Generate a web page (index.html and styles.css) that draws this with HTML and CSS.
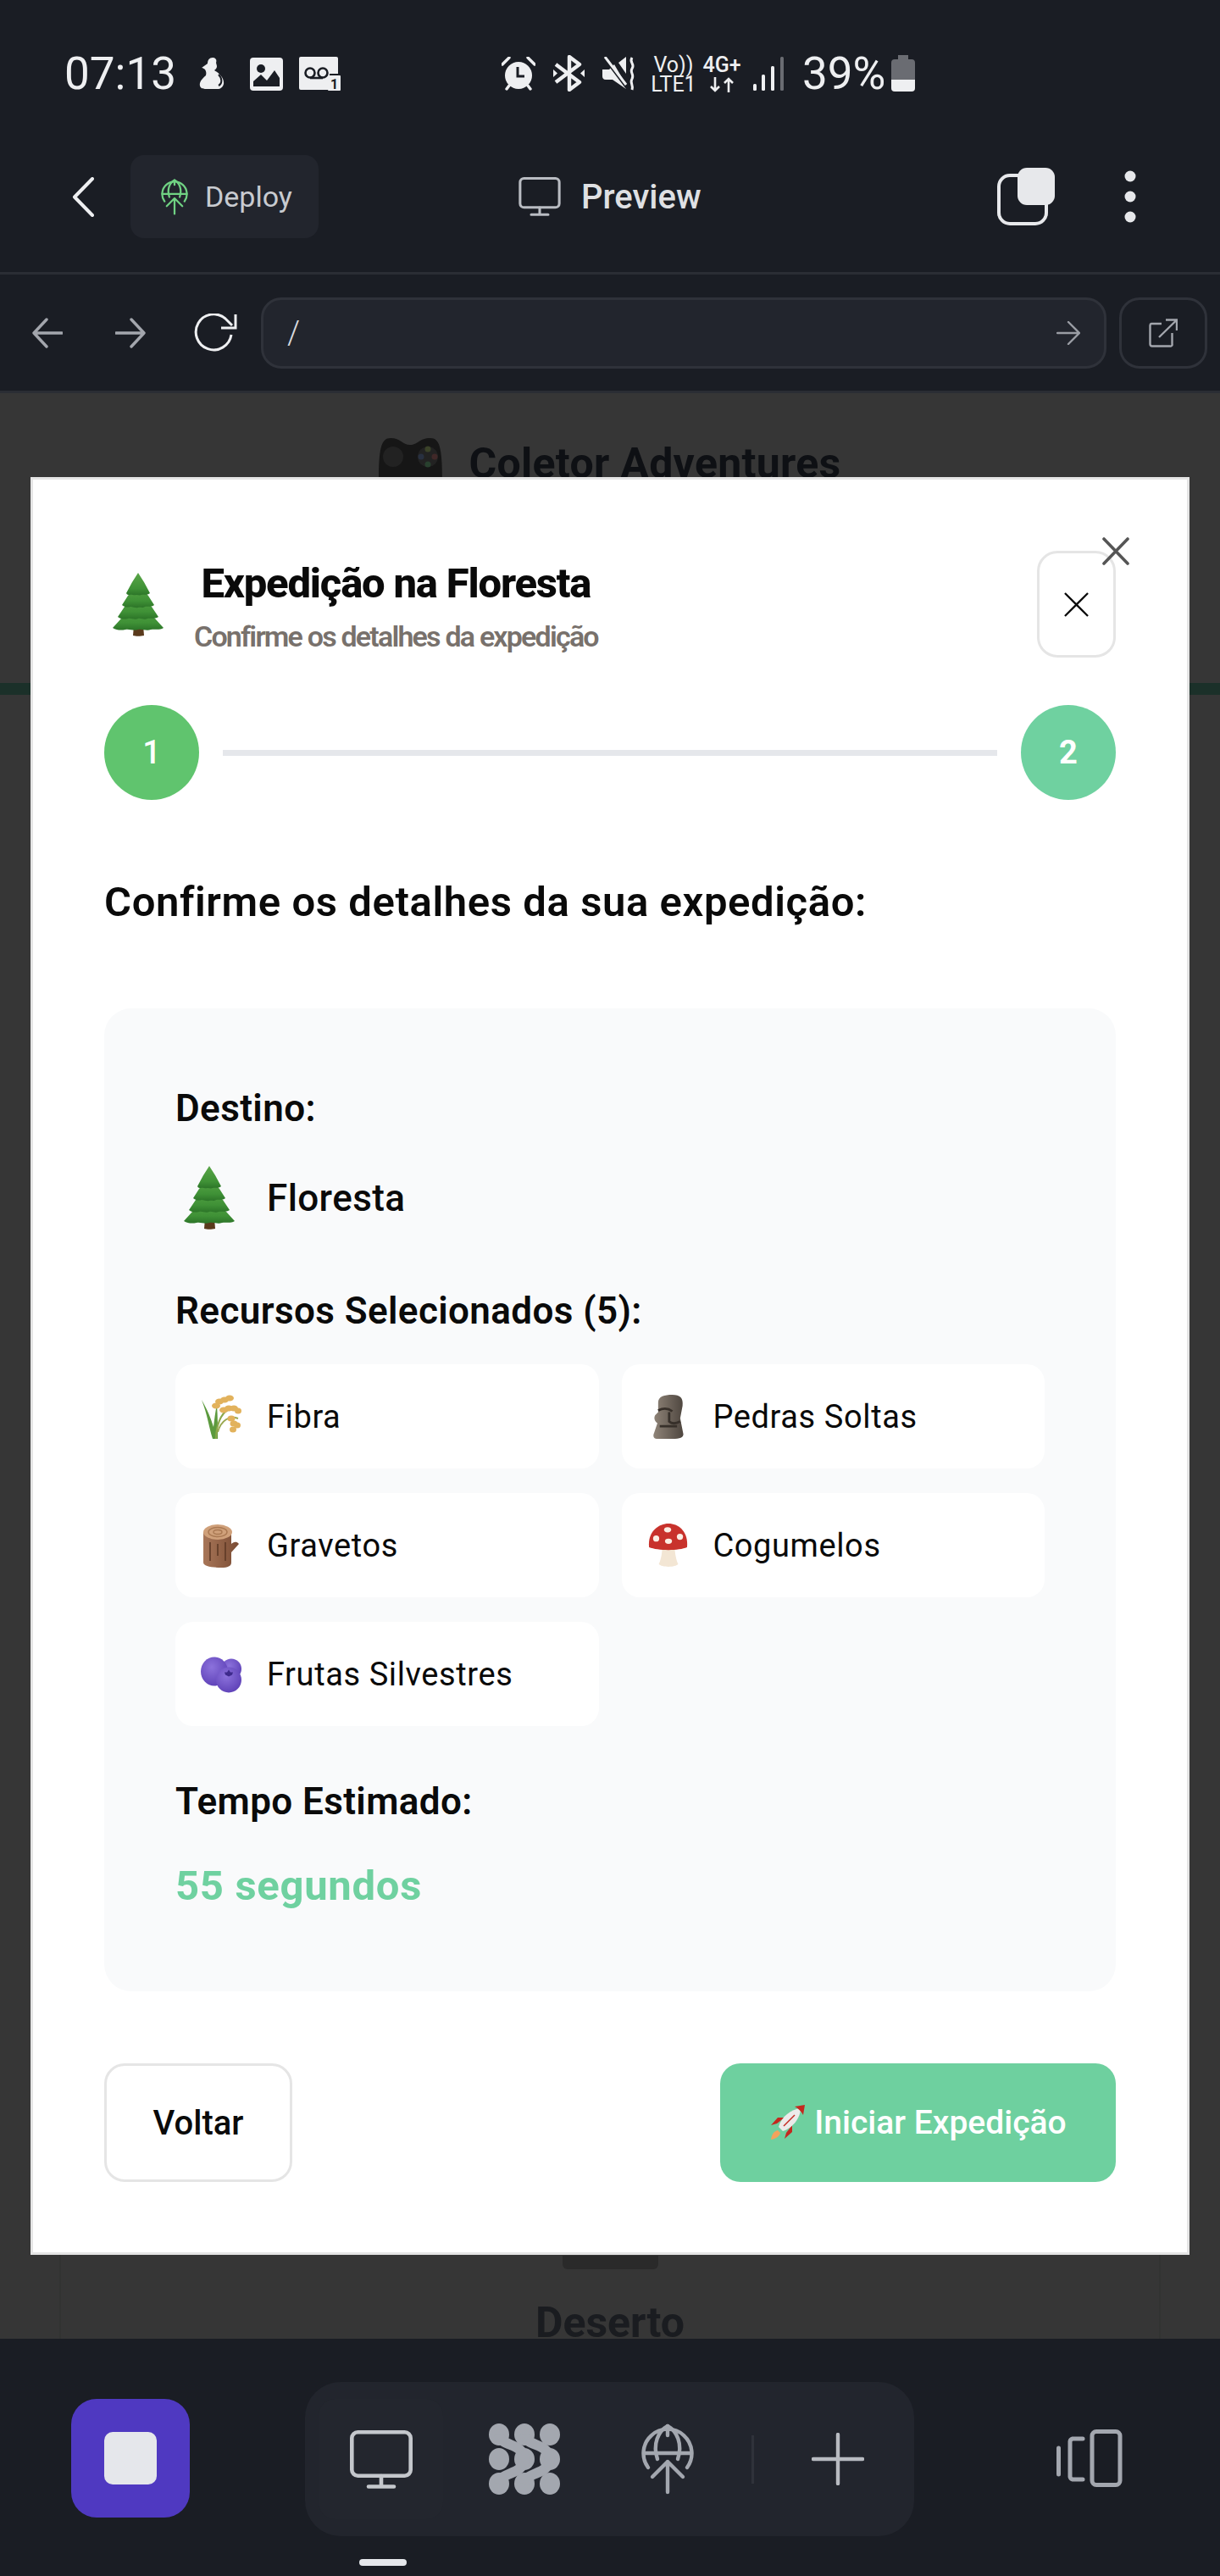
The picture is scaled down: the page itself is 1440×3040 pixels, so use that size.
FILE: index.html
```html
<!DOCTYPE html>
<html lang="pt">
<head>
<meta charset="utf-8">
<title>Expedição na Floresta</title>
<link rel="stylesheet" href="styles.css">
</head>
<body>
<svg class="defs" width="0" height="0">
  <defs>
    <linearGradient id="leaf" x1="0" y1="0" x2="0" y2="1"><stop offset="0" stop-color="#5aa648"/><stop offset=".7" stop-color="#3f9136"/><stop offset="1" stop-color="#2c7428"/></linearGradient>
    <radialGradient id="berry" cx=".4" cy=".35" r=".75"><stop offset="0" stop-color="#8c72dc"/><stop offset="1" stop-color="#5a3db4"/></radialGradient>
    <linearGradient id="bark" x1="0" y1="0" x2="1" y2="0"><stop offset="0" stop-color="#a87658"/><stop offset="1" stop-color="#7a4c34"/></linearGradient>
    <linearGradient id="stone" x1="0" y1="0" x2="1" y2="0"><stop offset="0" stop-color="#8f8478"/><stop offset="1" stop-color="#4e463f"/></linearGradient>
    <symbol id="tree" viewBox="0 0 60 75">
      <path d="M25 62 H36 L37 74 C33 75 27 75 24 74 Z" fill="#5a3a1c"/>
      <path d="M30 38 L50 54 L60 65 C55 68 50 66 45 67 C40 69 35 66 30 67 C25 69 20 66 15 67 C10 68 5 68 0 65 L10 54 Z" fill="url(#leaf)"/>
      <path d="M30 26 L46 40 L54 52 C49 55 45 53 41 54 C37 56 33 53 30 54 C26 56 22 53 18 54 C14 55 10 55 6 52 L14 40 Z" fill="url(#leaf)"/>
      <path d="M30 14 L42 27 L49 38 C45 41 41 39 38 40 C35 42 33 40 30 41 C27 42 24 40 21 40 C18 41 15 41 11 38 L18 27 Z" fill="url(#leaf)"/>
      <path d="M30 0 L37 11 L44 24 C40 27 37 25 34 26 C32 27 30 26 28 26 C25 27 22 25 20 26 C18 26 17 26 16 24 L23 11 Z" fill="url(#leaf)"/>
    </symbol>
    <symbol id="globe-up" viewBox="0 0 62 84">
      <g fill="none" stroke="currentColor" stroke-width="4.4" stroke-linecap="round" stroke-linejoin="round">
        <path d="M8 52 A28.5 28.5 0 1 1 54 52"/>
        <path d="M19 42 C13 24 20 9 31 3 C42 9 49 24 43 42"/>
        <path d="M31 3 V14 M3 35 H59"/>
        <path d="M31 81 V45 M13 63 L31 45 L49 63"/>
      </g>
    </symbol>
    <symbol id="monitor" viewBox="0 0 74 69">
      <g fill="none" stroke="currentColor" stroke-width="4.6" stroke-linecap="round">
        <rect x="2.3" y="2.3" width="69.4" height="51.4" rx="7"/>
        <path d="M37 54 V66 M22 66.5 H52"/>
      </g>
    </symbol>
  </defs>
</svg>

<div class="app">
  <div class="status">
    <span class="status-time">07:13</span>
    <svg class="ic-person" viewBox="0 0 30 38"><path d="M16 0 C20 0 21 3 20 6 L21 10 C21 13 19 14 18 15 C23 18 30 24 29 31 C28 35 25 37 22 37 H7 C3 37 0 35 1 30 C2 26 5 24 8 21 C9 17 8 13 3 12 L10 7 C10 3 12 0 16 0 Z" fill="#eeeff1"/><path d="M23 20 C28 25 27 31 23 33" stroke="#1a1d24" stroke-width="2" fill="none"/></svg>
    <svg class="ic-image" viewBox="0 0 39 39"><rect width="39" height="39" rx="4" fill="#eeeff1"/><circle cx="13" cy="13" r="5" fill="#1a1d24"/><path d="M4 34 V28 L13 20 L20 27 L29 15 L35 24 V34 Z" fill="#1a1d24"/></svg>
    <svg class="ic-vm" viewBox="0 0 49 40"><path d="M2 0 H44 A2 2 0 0 1 46 2 V20 H36 V39 H2 A2 2 0 0 1 0 37 V2 A2 2 0 0 1 2 0 Z" fill="#eeeff1"/><circle cx="13" cy="19" r="5.5" fill="none" stroke="#1a1d24" stroke-width="2.6"/><circle cx="28" cy="19" r="5.5" fill="none" stroke="#1a1d24" stroke-width="2.6"/><path d="M13 25 H28" stroke="#1a1d24" stroke-width="2.6"/><rect x="34" y="22" width="15" height="18" rx="1" fill="#eeeff1"/><text x="41.5" y="37.5" class="vm-num">1</text></svg>
    <span class="status-spacer"></span>
    <svg class="ic-alarm" viewBox="0 0 40 40"><circle cx="20" cy="22" r="16" fill="#eeeff1"/><path d="M19 12 V23 H27" fill="none" stroke="#1a1d24" stroke-width="3"/><path d="M1 9 L9 1 M39 9 L31 1 M6 38 L9 34 M34 38 L31 34" stroke="#eeeff1" stroke-width="3.4" stroke-linecap="round"/></svg>
    <svg class="ic-bt" viewBox="0 0 37 43"><path d="M3 11 L31 32 L19 41 V2 L31 11 L3 32" fill="none" stroke="#eeeff1" stroke-width="4.4" stroke-linejoin="round"/><path d="M0 17 L5 21.5 L0 26 Z M37 17 L32 21.5 L37 26 Z" fill="#eeeff1"/></svg>
    <svg class="ic-mute" viewBox="0 0 40 40"><path d="M0 15 H8 L14 9 L28 33 V38 L12 27 H4 C1 27 0 25 0 23 Z M19 7 L28 0 V20 Z" fill="#eeeff1"/><path d="M2 1 L29 37" stroke="#1a1d24" stroke-width="3"/><path d="M3 0 L28 33" stroke="#eeeff1" stroke-width="3"/><path d="M35 1 C31 7 39 8 35 14 C32 19 38 20 35 26 C32 31 37 33 35 39" fill="none" stroke="#eeeff1" stroke-width="3"/></svg>
    <div class="net-volte">
      <span class="net-top">Vo))</span>
      <span class="net-bottom">LTE1</span>
    </div>
    <div class="net-4g">
      <span class="net-top">4G+</span>
      <svg class="ic-updown" viewBox="0 0 30 18"><path d="M7 0 V16 M2 11 L7 16 L12 11 M23 18 V2 M18 7 L23 2 L28 7" fill="none" stroke="#eeeff1" stroke-width="2.6"/></svg>
    </div>
    <svg class="ic-signal" viewBox="0 0 36 40"><rect x="0" y="32" width="4" height="8" rx="1.5" fill="#eeeff1"/><rect x="10" y="21" width="4" height="19" rx="1.5" fill="#eeeff1"/><rect x="21" y="11" width="4" height="29" rx="1.5" fill="#eeeff1"/><rect x="32" y="0" width="4" height="40" rx="1.5" fill="#6a6c72"/></svg>
    <span class="status-batt">39%</span>
    <svg class="ic-batt" viewBox="0 0 28 43"><path d="M8 0 H20 V5 H24 A4 4 0 0 1 28 9 V29 H0 V9 A4 4 0 0 1 4 5 H8 Z" fill="#6a6c72"/><path d="M0 29 H28 V39 A4 4 0 0 1 24 43 H4 A4 4 0 0 1 0 39 Z" fill="#eeeff1"/></svg>
  </div>

  <header class="topbar">
    <div class="topbar-left">
      <svg class="ic-chevron" viewBox="0 0 26 47"><path d="M24 2 L3 23.5 L24 45" fill="none" stroke="#eeeff1" stroke-width="4" stroke-linecap="round" stroke-linejoin="round"/></svg>
      <button class="deploy-btn"><svg class="ic-deploy"><use href="#globe-up"/></svg><span>Deploy</span></button>
    </div>
    <div class="topbar-center"><svg class="ic-preview"><use href="#monitor"/></svg><span>Preview</span></div>
    <div class="topbar-right">
      <svg class="ic-copy" viewBox="0 0 68 68"><rect x="2" y="9" width="56" height="57" rx="13" fill="none" stroke="#e7e8eb" stroke-width="4"/><rect x="24" y="0" width="44" height="44" rx="11" fill="#e7e8eb"/></svg>
      <svg class="ic-dots" viewBox="0 0 14 62"><circle cx="7" cy="7" r="6.5"/><circle cx="7" cy="31" r="6.5"/><circle cx="7" cy="55" r="6.5"/></svg>
    </div>
  </header>

  <nav class="urlbar">
    <svg class="ic-nav" viewBox="0 0 36 36"><path d="M35 18 H2 M17 2 L2 18 L17 34" fill="none" stroke="#a3a6ad" stroke-width="3.4" stroke-linecap="round" stroke-linejoin="round"/></svg>
    <svg class="ic-nav" viewBox="0 0 36 36"><path d="M1 18 H34 M19 2 L34 18 L19 34" fill="none" stroke="#a3a6ad" stroke-width="3.4" stroke-linecap="round" stroke-linejoin="round"/></svg>
    <svg class="ic-reload" viewBox="0 0 51 46"><path d="M44 25 A21 21 0 1 1 37 6 L45 14" fill="none" stroke="#eeeff1" stroke-width="3"/><path d="M49 1 V17 H32" fill="none" stroke="#eeeff1" stroke-width="3"/></svg>
    <div class="url-input"><span class="url-text">/</span><svg class="ic-go" viewBox="0 0 28 28"><path d="M1 14 H27 M14 1 L27 14 L14 27" fill="none" stroke="#9a9da4" stroke-width="2.4" stroke-linecap="round" stroke-linejoin="round"/></svg></div>
    <button class="open-btn"><svg class="ic-open" viewBox="0 0 34 34"><path d="M15 6 H3 A2 2 0 0 0 1.500 8 V30 A2.500 2.500 0 0 0 4 32.500 H25 A2 2 0 0 0 27.500 30 V17" fill="none" stroke="#a3a6ad" stroke-width="2.4"/><path d="M12 22 L33 1.500 M20 1.500 H33 V14" fill="none" stroke="#a3a6ad" stroke-width="2.4"/></svg></button>
  </nav>

  <main class="stage">
    <div class="bg-page">
      <div class="bg-head">
        <svg class="bg-pad" viewBox="0 0 75 90"><path d="M14 0 C26 0 28 8 37 8 C46 8 48 0 61 0 C72 0 75 12 75 50 C75 74 70 90 62 90 C50 90 48 70 37 70 C26 70 25 90 13 90 C5 90 0 74 0 50 C0 12 3 0 14 0 Z" fill="#161616"/><circle cx="17" cy="22" r="12" fill="#222"/><circle cx="58" cy="22" r="12" fill="#222"/><circle cx="58" cy="13" r="3.500" fill="#3a4228"/><circle cx="66" cy="22" r="3.500" fill="#402828"/><circle cx="50" cy="22" r="3.500" fill="#283040"/><circle cx="58" cy="31" r="3.500" fill="#28402e"/></svg>
        <span class="bg-title">Coletor Adventures</span>
      </div>
      <div class="bg-card">
        <div class="bg-card-bar"></div>
        <div class="bg-card-name">Deserto</div>
      </div>
    </div>

    <section class="modal">
      <svg class="modal-x" viewBox="0 0 32 33"><path d="M2 2 L30 31 M30 2 L2 31" stroke="#555" stroke-width="3.6" stroke-linecap="round"/></svg>
      <div class="modal-head">
        <div class="modal-head-main">
          <svg class="em-tree-head"><use href="#tree"/></svg>
          <div class="modal-titles">
            <h2 class="modal-title">Expedição na Floresta</h2>
            <p class="modal-sub">Confirme os detalhes da expedição</p>
          </div>
        </div>
        <button class="btn-close"><svg viewBox="0 0 30 30" class="ic-close"><path d="M1 1 L29 29 M29 1 L1 29" stroke="#0a0a0a" stroke-width="2.4"/></svg></button>
      </div>

      <div class="steps">
        <div class="step step-one">1</div>
        <div class="step-line"></div>
        <div class="step step-two">2</div>
      </div>

      <h3 class="confirm-title">Confirme os detalhes da sua expedição:</h3>

      <div class="panel">
        <div class="label">Destino:</div>
        <div class="dest"><svg class="em-tree-dest"><use href="#tree"/></svg><span>Floresta</span></div>

        <div class="label label-res">Recursos Selecionados (5):</div>
        <div class="res-grid">
          <div class="res">
            <svg class="em" viewBox="0 0 48 52"><path d="M14 52 C10 40 8 24 1 6 C8 18 12 28 15 38 C16 30 17 20 19 12 C20 26 20 38 20 52 Z" fill="#5c9a3e"/><path d="M18 52 C18 36 24 22 32 18" fill="none" stroke="#8aa84a" stroke-width="2"/><path d="M20 44 C24 30 34 24 44 28" fill="none" stroke="#9aa850" stroke-width="2"/><g fill="#e2b25c"><ellipse cx="22" cy="8" rx="5" ry="3.500"/><ellipse cx="28" cy="6" rx="5" ry="3.500"/><ellipse cx="34" cy="4" rx="5" ry="3.500"/><ellipse cx="18" cy="13" rx="5" ry="3.500"/><ellipse cx="27" cy="18" rx="5" ry="3.500"/><ellipse cx="33" cy="16" rx="5" ry="3.500"/><ellipse cx="39" cy="16" rx="5" ry="3.500"/><ellipse cx="44" cy="19" rx="4" ry="3.500"/><ellipse cx="36" cy="28" rx="4.500" ry="3.500"/><ellipse cx="39" cy="34" rx="4.500" ry="3.500"/><ellipse cx="38" cy="41" rx="4" ry="3.500"/><ellipse cx="43" cy="36" rx="4" ry="3.500"/></g></svg>
            <span>Fibra</span>
          </div>
          <div class="res">
            <svg class="em" viewBox="0 0 48 56"><path d="M12 10 C12 2 20 0 30 0 C40 0 44 4 43 14 L40 30 L44 50 C44 54 40 56 30 56 H10 C6 56 5 52 7 48 L11 36 C8 34 6 30 8 26 L12 22 Z" fill="url(#stone)"/><path d="M12 20 C20 16 26 18 30 21 M26 22 L26 34 C30 38 36 36 40 34" fill="none" stroke="#37302a" stroke-width="3"/><path d="M14 40 H36" stroke="#37302a" stroke-width="3"/></svg>
            <span>Pedras Soltas</span>
          </div>
          <div class="res">
            <svg class="em" viewBox="0 0 44 52"><path d="M1 10 V46 C1 50 10 52 22 52 C30 52 34 50 34 46 V34 L43 24 C40 20 36 22 34 24 V10 Z" fill="url(#bark)"/><ellipse cx="18" cy="10" rx="17" ry="9" fill="#cfa07a"/><ellipse cx="18" cy="10" rx="11" ry="5.500" fill="none" stroke="#a97852" stroke-width="1.400"/><ellipse cx="18" cy="10" rx="5" ry="2.500" fill="none" stroke="#a97852" stroke-width="1.400"/><path d="M9 22 V44 M18 24 V38 M27 22 V44" stroke="#5e3a26" stroke-width="1.600"/></svg>
            <span>Gravetos</span>
          </div>
          <div class="res">
            <svg class="em" viewBox="0 0 46 50"><path d="M17 24 H31 C31 34 33 42 35 46 C32 50 16 50 13 46 C16 40 17 32 17 24 Z" fill="#f3e6d4"/><path d="M2 27 C0 10 12 0 24 0 C36 0 47 10 45 27 C36 31 12 31 2 27 Z" fill="#c8322c"/><g fill="#fbeee4"><ellipse cx="23" cy="7" rx="4" ry="3"/><ellipse cx="10" cy="17" rx="3.500" ry="3.500"/><ellipse cx="24" cy="20" rx="4" ry="3"/><ellipse cx="37" cy="15" rx="3.500" ry="3.500"/></g></svg>
            <span>Cogumelos</span>
          </div>
          <div class="res">
            <svg class="em" viewBox="0 0 48 43"><circle cx="36" cy="15" r="12" fill="url(#berry)"/><ellipse cx="16" cy="18" rx="16" ry="17" fill="url(#berry)"/><circle cx="33" cy="28" r="15" fill="url(#berry)"/><path d="M33 16 L35 19 L38 19 L37 22 L33 24 L29 22 L28 19 L31 19 Z" fill="#3e2a8c"/></svg>
            <span>Frutas Silvestres</span>
          </div>
        </div>

        <div class="label label-time">Tempo Estimado:</div>
        <div class="time-value">55 segundos</div>
      </div>

      <div class="actions">
        <button class="btn-back">Voltar</button>
        <button class="btn-start">
          <svg class="em-rocket" viewBox="0 0 43 42"><path d="M2 41 C3 34 6 31 10 30 L13 33 C12 37 8 40 2 41 Z" fill="#f3a35c"/><path d="M9 22 L2 24 L10 15 L18 15 Z M20 33 L18 40 L27 32 L27 24 Z" fill="#c4281f"/><path d="M11 26 C14 14 26 5 37 4 C37 15 28 27 16 31 Z" fill="#eceaea"/><path d="M30 2 L42 0 L40 12 C38 8 34 4 30 2 Z" fill="#c4281f"/><path d="M17 25 L30 12" stroke="#c4281f" stroke-width="1.400"/></svg>
          <span>Iniciar Expedição</span>
        </button>
      </div>
    </section>
  </main>

  <footer class="bottombar">
    <button class="btn-stop"><span class="stop-square"></span></button>
    <div class="dock">
      <div class="dock-item dock-active"><svg class="ic-dock-monitor"><use href="#monitor"/></svg></div>
      <div class="dock-item"><svg class="ic-neural" viewBox="0 0 84 84"><g fill="#a3a7af"><ellipse cx="12" cy="13" rx="12" ry="13"/><ellipse cx="42" cy="13" rx="12" ry="13"/><ellipse cx="72" cy="13" rx="12" ry="13"/><ellipse cx="12" cy="42" rx="12" ry="13"/><ellipse cx="42" cy="42" rx="12" ry="13"/><ellipse cx="72" cy="42" rx="12" ry="13"/><ellipse cx="12" cy="71" rx="12" ry="13"/><ellipse cx="42" cy="71" rx="12" ry="13"/><ellipse cx="72" cy="71" rx="12" ry="13"/></g><g fill="none" stroke="#a3a7af" stroke-width="12"><path d="M12 13 C14 28 40 22 42 42 C40 62 14 56 12 71"/><path d="M42 13 C44 28 70 22 72 42 C70 62 44 56 42 71"/></g></svg></div>
      <div class="dock-item"><svg class="ic-dock-globe"><use href="#globe-up"/></svg></div>
      <span class="dock-sep"></span>
      <div class="dock-item"><svg class="ic-plus" viewBox="0 0 62 62"><path d="M31 2 V60 M2 31 H60" stroke="#b8bbc1" stroke-width="4.400" stroke-linecap="round"/></svg></div>
    </div>
    <svg class="ic-devices" viewBox="0 0 78 68"><g fill="none" stroke="#a3a7af" stroke-width="5" stroke-linecap="round"><rect x="42" y="2.500" width="33" height="63" rx="5"/><path d="M31 11 H19 A4 4 0 0 0 16 14 V56 A4 4 0 0 0 19 59 H31"/><path d="M2.500 22 V53"/></g></svg>
    <span class="home-indicator"></span>
  </footer>
</div>
</body>
</html>
```

FILE: styles.css
```css
* { box-sizing: border-box; }
html, body { margin: 0; padding: 0; }
body { background: #1a1d24; font-family: Roboto, "Noto Sans", sans-serif; color: #0a0a0a; }
button { font-family: inherit; padding: 0; cursor: pointer; }
h2, h3, p { margin: 0; }
.defs { position: absolute; }
svg { display: block; flex: none; }

.app { width: 1440px; height: 3040px; display: flex; flex-direction: column; background: #1a1d24; overflow: hidden; }

/* status */
.status { height: 143px; padding: 65px 0 0 76px; display: flex; align-items: flex-start; color: #eeeff1; flex: none; }
.status-time { width: 131px; font-size: 53px; line-height: 44px; margin-right: 28px; white-space: nowrap; }
.ic-person { width: 30px; height: 38px; margin: 3px 30px 0 0; }
.ic-image { width: 39px; height: 39px; margin: 3px 19px 0 0; }
.ic-vm { width: 49px; height: 40px; margin-top: 2px; }
.vm-num { font: 700 16px Roboto, sans-serif; text-anchor: middle; fill: #1a1d24; }
.status-spacer { width: 190px; flex: none; }
.ic-alarm { width: 40px; height: 40px; margin: 2px 21px 0 0; }
.ic-bt { width: 37px; height: 43px; margin: 0 21px 0 0; }
.ic-mute { width: 40px; height: 40px; margin: 2px 18px 0 0; }
.net-volte, .net-4g { display: flex; flex-direction: column; align-items: center; margin-top: 1px; font-size: 25px; line-height: 22px; width: 52px; }
.net-volte { margin-right: 9px; }
.net-4g { width: 44px; margin-right: 15px; font-weight: 500; }
.net-top { height: 23px; white-space: nowrap; }
.net-bottom { white-space: nowrap; }
.ic-updown { width: 30px; height: 18px; margin-top: 2px; }
.ic-signal { width: 36px; height: 40px; margin: 2px 22px 0 0; }
.status-batt { width: 96px; font-size: 53px; line-height: 44px; margin-right: 9px; white-space: nowrap; }
.ic-batt { width: 28px; height: 43px; }

/* top bar */
.topbar { height: 181px; flex: none; display: flex; align-items: center; border-bottom: 3px solid #2a2d34; padding: 0 99px 0 85px; }
.topbar-left { display: flex; align-items: center; gap: 43px; width: 527px; }
.ic-chevron { width: 26px; height: 47px; }
.deploy-btn { width: 222px; height: 98px; display: flex; align-items: center; gap: 20px; padding-left: 36px; background: #22252d; border: 0; border-radius: 16px; color: #c8cbd0; font-size: 34px; }
.ic-deploy { width: 32px; height: 43px; color: #70d283; }
.topbar-center { display: flex; align-items: center; gap: 24px; color: #dfe0e3; font-size: 40px; font-weight: 500; }
.ic-preview { width: 50px; height: 46px; color: #b9bcc2; }
.topbar-right { display: flex; align-items: center; gap: 82px; margin-left: auto; }
.ic-copy { width: 68px; height: 68px; }
.ic-dots { width: 14px; height: 62px; fill: #e7e8eb; }

/* url */
.urlbar { height: 140px; flex: none; display: flex; align-items: center; border-bottom: 3px solid #2a2d34; padding: 0 15px 0 38px; }
.ic-nav { width: 36px; height: 36px; margin-right: 62px; }
.ic-nav + .ic-nav { margin-right: 57px; }
.ic-reload { width: 51px; height: 46px; margin-right: 28px; }
.url-input { flex: 1; height: 84px; border: 3px solid #2f323a; border-radius: 24px; background: #22252d; display: flex; align-items: center; justify-content: space-between; padding: 0 28px 0 28px; }
.url-text { font-size: 38px; color: #d8dade; font-weight: 300; }
.ic-go { width: 28px; height: 28px; }
.open-btn { width: 104px; height: 84px; margin-left: 15px; border: 3px solid #2f323a; border-radius: 24px; background: transparent; display: flex; align-items: center; justify-content: center; }
.ic-open { width: 34px; height: 34px; }

/* backdrop */
.stage { flex: 1; position: relative; background: #363636; overflow: hidden; }
.bg-page { height: 100%; display: flex; flex-direction: column; }
.bg-head { height: 356px; flex: none; padding-top: 53px; display: flex; justify-content: center; gap: 31px; border-bottom: 14px solid #1b3029; }
.bg-pad { width: 75px; height: 90px; }
.bg-title { font-size: 50px; font-weight: 700; color: #0e1014; line-height: 60px; letter-spacing: .3px; }
.bg-card { flex: 1; margin: 0 70px; border-left: 2px solid #323332; border-right: 2px solid #323332; display: flex; flex-direction: column; align-items: center; padding-top: 1842px; }
.bg-card-bar { width: 113px; height: 16px; background: #2a2a2a; border-radius: 0 0 6px 6px; }
.bg-card-name { font-size: 50px; font-weight: 700; color: #1a1c20; line-height: 60px; margin-top: 33px; }

/* modal */
.modal { position: absolute; left: 36px; top: 99px; width: 1368px; height: 2098px; background: #fff; border: 3px solid #e5e5e5; padding: 84px 84px 0 84px; }
.modal-x { position: absolute; right: 68px; top: 68px; width: 32px; height: 33px; }
.modal-head { height: 126px; display: flex; align-items: center; justify-content: space-between; }
.modal-head-main { display: flex; align-items: center; }
.em-tree-head { width: 60px; height: 75px; margin: 0 36px 0 10px; }
.modal-titles { text-align: center; margin-top: 6px; }
.modal-title { font-size: 49px; font-weight: 800; line-height: 60px; letter-spacing: -1.2px; color: #0a0a0a; }
.modal-sub { margin-top: 10px; font-size: 34px; font-weight: 600; line-height: 44px; letter-spacing: -1.8px; color: #78716c; }
.btn-close { width: 93px; height: 126px; background: #fff; border: 3px solid #e5e5e5; border-radius: 24px; display: flex; align-items: center; justify-content: center; }
.ic-close { width: 29px; height: 29px; }

.steps { margin-top: 56px; display: flex; align-items: center; }
.step { width: 112px; height: 112px; border-radius: 50%; color: #fff; font-size: 38px; font-weight: 500; display: flex; align-items: center; justify-content: center; flex: none; }
.step-one { background: #60c46e; }
.step-two { background: #6fd1a0; font-weight: 700; }
.step-line { flex: 1; height: 7px; margin: 0 28px; background: #e5e7eb; }

.confirm-title { margin-top: 86px; font-size: 49px; line-height: 70px; font-weight: 600; letter-spacing: .6px; color: #0a0a0a; }

.panel { margin-top: 90px; background: #f9fafb; border-radius: 32px; padding: 86px 84px 88px; }
.label { font-size: 44px; line-height: 64px; font-weight: 600; letter-spacing: .4px; color: #0a0a0a; }
.dest { margin-top: 36px; height: 75px; display: flex; align-items: center; gap: 37px; padding-left: 9px; font-size: 44px; font-weight: 500; letter-spacing: .4px; }
.em-tree-dest { width: 62px; height: 75px; }
.label-res { margin-top: 64px; }
.res-grid { margin-top: 31px; display: grid; grid-template-columns: 1fr 1fr; gap: 29px 27px; }
.res { height: 123px; background: #fff; border-radius: 21px; display: flex; align-items: center; font-size: 38px; letter-spacing: .6px; padding-left: 30px; }
.em { width: 48px; height: 52px; margin-right: 30px; }
.label-time { margin-top: 57px; }
.time-value { margin-top: 32px; font-size: 49px; line-height: 72px; font-weight: 700; letter-spacing: .7px; color: #6fd1a0; }

.actions { margin-top: 85px; display: flex; justify-content: space-between; }
.btn-back { width: 222px; height: 140px; background: #fff; border: 3px solid #e5e5e5; border-radius: 24px; font-size: 40px; font-weight: 500; color: #0a0a0a; }
.btn-start { width: 467px; height: 140px; background: #6ed09f; border: 0; border-radius: 24px; font-size: 39px; font-weight: 500; color: #fff; display: flex; align-items: center; justify-content: center; gap: 10px; }
.em-rocket { width: 43px; height: 42px; }

/* bottom */
.bottombar { height: 280px; flex: none; position: relative; display: flex; align-items: flex-start; padding-left: 84px; background: #1a1d24; }
.btn-stop { width: 140px; height: 140px; margin-top: 71px; border: 0; border-radius: 30px; background: #4f39c1; display: flex; align-items: center; justify-content: center; }
.stop-square { width: 62px; height: 62px; background: #e5e7eb; border-radius: 10px; }
.dock { width: 719px; height: 182px; margin: 51px 0 0 136px; border-radius: 42px; background: #22252d; display: flex; align-items: center; padding-left: 16px; }
.dock-item { display: flex; align-items: center; justify-content: center; flex: none; }
.dock-active { width: 147px; height: 142px; border-radius: 20px; background: #23262e; }
.ic-dock-monitor { width: 74px; height: 69px; color: #c4c7cc; }
.ic-neural { width: 84px; height: 84px; margin-left: 54px; }
.ic-dock-globe { width: 62px; height: 84px; margin-left: 96px; color: #a3a7af; }
.dock-sep { width: 3px; height: 57px; margin-left: 68px; background: #2f323a; flex: none; }
.ic-plus { width: 62px; height: 62px; margin-left: 68px; }
.ic-devices { width: 78px; height: 68px; margin: 107px 0 0 168px; }
.home-indicator { position: absolute; left: 424px; top: 260px; width: 56px; height: 8px; border-radius: 4px; background: #e5e7eb; }
```
